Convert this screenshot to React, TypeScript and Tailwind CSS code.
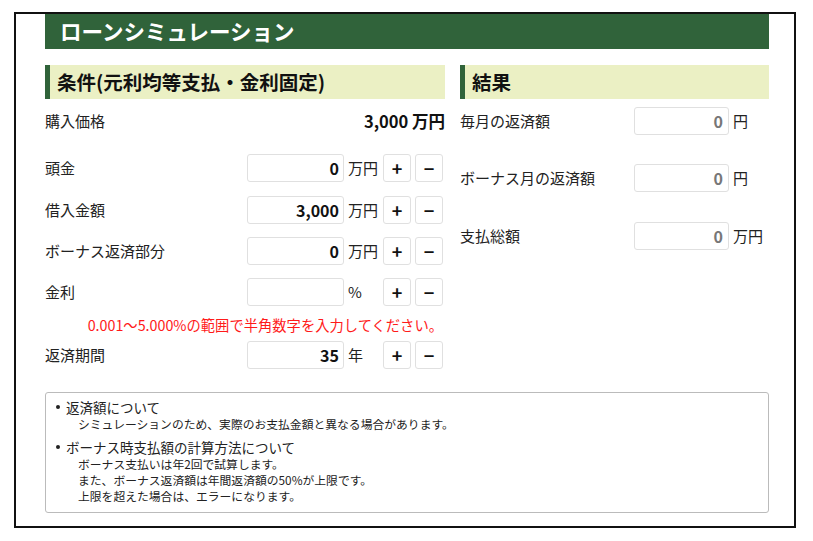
import React from "react";

const FONT = { fontFamily: '"Noto Sans CJK JP", "Noto Sans", sans-serif' };

const InputRow = ({
  label,
  value,
  unit,
  className,
}: {
  label: string;
  value: string;
  unit: string;
  className: string;
}) => (
  <div className={`flex h-[28px] items-center ${className}`}>
    <div className="flex-1 text-[15px] text-[#222]">{label}</div>
    <div className="flex h-[28px] w-[97px] items-center justify-end rounded-[3px] border border-[#e0e0e0] bg-white pr-[4px] text-[16px] font-bold text-[#111]">
      {value}
    </div>
    <div className="w-[39px] pl-[4px] text-[15px] text-[#222]">{unit}</div>
    <button className="flex h-[28px] w-[28px] items-center justify-center rounded-[3px] border border-[#e0e0e0] bg-white text-[18px] font-bold text-[#111]">
      +
    </button>
    <button className="ml-[4px] flex h-[28px] w-[28px] items-center justify-center rounded-[3px] border border-[#e0e0e0] bg-white text-[18px] font-bold text-[#111]">
      −
    </button>
  </div>
);

const ResultRow = ({
  label,
  unit,
  className,
}: {
  label: string;
  unit: string;
  className: string;
}) => (
  <div className={`flex h-[28px] items-center ${className}`}>
    <div className="w-[174px] text-[15px] text-[#222]">{label}</div>
    <div className="flex h-[28px] w-[95px] items-center justify-end rounded-[3px] border border-[#e0e0e0] bg-white pr-[5px] text-[16px] font-bold text-[#777]">
      0
    </div>
    <div className="pl-[4px] text-[15px] text-[#222]">{unit}</div>
  </div>
);

const SectionHead = ({ children }: { children: React.ReactNode }) => (
  <div className="flex h-[34px] items-center border-l-[5px] border-[#30633a] bg-[#ebf0c4] pl-[7px] text-[19.5px] font-bold text-[#111]">
    {children}
  </div>
);

const Bullet = () => (
  <span className="flex w-[10px] items-center">
    <span className="h-[4px] w-[4px] rounded-full bg-[#222]" />
  </span>
);

export default function App() {
  return (
    <div className="min-h-[541px] bg-white" style={FONT}>
      <div className="ml-[14px] mt-[12px] w-[782px] border-2 border-[#111] pl-[29px] pr-[25px] pb-[13px]">
        <div className="flex h-[35px] items-center bg-[#30633a] pl-[15px] text-[21.5px] font-bold text-white">
          ローンシミュレーション
        </div>

        <div className="mt-[16px] flex items-start gap-[15px]">
          <div className="w-[400px]">
            <SectionHead>条件(元利均等支払・金利固定)</SectionHead>
            <div className="mt-[8px] flex h-[28px] items-center">
              <div className="flex-1 text-[15px] text-[#222]">購入価格</div>
              <div className="text-[16.5px] font-bold text-[#111]">3,000 万円</div>
            </div>
            <div className="pr-[2px]">
              <InputRow className="mt-[19px]" label="頭金" value="0" unit="万円" />
              <InputRow className="mt-[14px]" label="借入金額" value="3,000" unit="万円" />
              <InputRow className="mt-[13px]" label="ボーナス返済部分" value="0" unit="万円" />
              <InputRow className="mt-[13px]" label="金利" value="" unit="%" />
              <div className="mt-[9px] flex h-[20px] items-center justify-end text-[14.3px] text-[#ff1a1a]">
                0.001～5.000%の範囲で半角数字を入力してください。
              </div>
              <InputRow className="mt-[6px]" label="返済期間" value="35" unit="年" />
            </div>
          </div>

          <div className="flex-1">
            <SectionHead>結果</SectionHead>
            <ResultRow className="mt-[8px]" label="毎月の返済額" unit="円" />
            <ResultRow className="mt-[29px]" label="ボーナス月の返済額" unit="円" />
            <ResultRow className="mt-[30px]" label="支払総額" unit="万円" />
          </div>
        </div>

        <div className="mt-[23px] rounded-[3px] border border-[#bbb] pb-[8px] pl-[10px] pt-[5px] text-[#222]">
          <div className="flex h-[18px] items-center text-[13.5px] leading-[18px]">
            <Bullet />
            <span>返済額について</span>
          </div>
          <div className="h-[16px] pl-[22px] text-[11.8px] leading-[16px]">
            シミュレーションのため、実際のお支払金額と異なる場合があります。
          </div>
          <div className="mt-[6px] flex h-[18px] items-center text-[13.5px] leading-[18px]">
            <Bullet />
            <span>ボーナス時支払額の計算方法について</span>
          </div>
          <div className="pl-[22px] text-[11.8px] leading-[16px]">
            <div>ボーナス支払いは年2回で試算します。</div>
            <div>また、ボーナス返済額は年間返済額の50%が上限です。</div>
            <div>上限を超えた場合は、エラーになります。</div>
          </div>
        </div>
      </div>
    </div>
  );
}
